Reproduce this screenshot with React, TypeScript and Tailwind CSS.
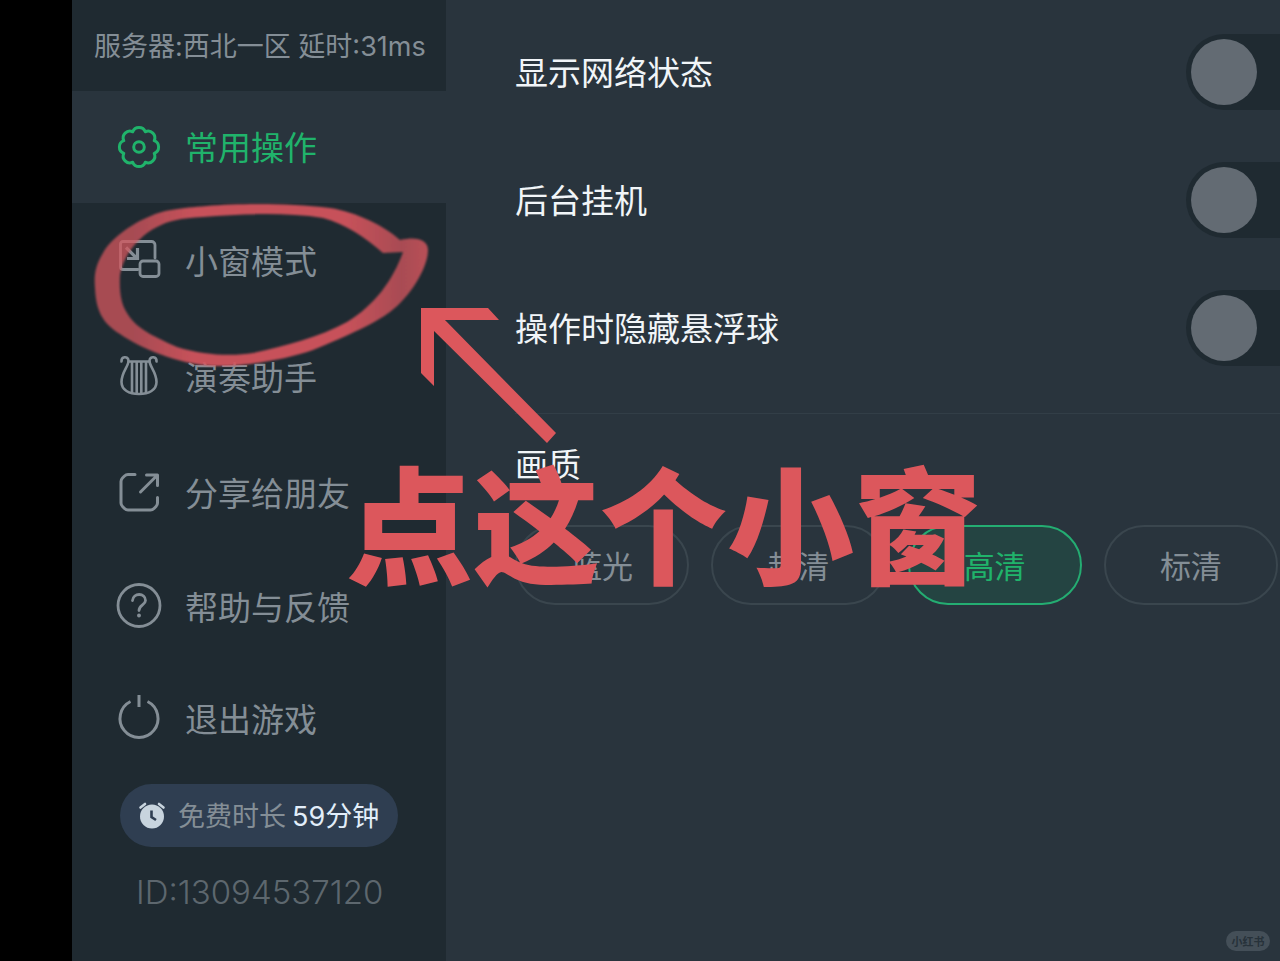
import React, { useState } from "react";
import clsx from "clsx";

const strokeProps = {
  fill: "none",
  stroke: "currentColor",
  strokeWidth: 3,
  strokeLinecap: "round" as const,
  strokeLinejoin: "round" as const,
};

const GearIcon = () => (
  <svg viewBox="-24 -24 48 48" className="size-12" {...strokeProps}>
    <path d="M15.2 -6.3A6.7 6.7 0 0 1 15.2 6.3A6.7 6.7 0 0 1 6.3 15.2A6.7 6.7 0 0 1 -6.3 15.2A6.7 6.7 0 0 1 -15.2 6.3A6.7 6.7 0 0 1 -15.2 -6.3A6.7 6.7 0 0 1 -6.3 -15.2A6.7 6.7 0 0 1 6.3 -15.2A6.7 6.7 0 0 1 15.2 -6.3Z" />
    <circle r="5.3" />
  </svg>
);

const WindowIcon = () => (
  <svg viewBox="0 0 48 48" className="size-12" {...strokeProps} strokeWidth={2.8}>
    <path d="M23 32.500H8A2.500 2.500 0 0 1 5.500 30V7A2.500 2.500 0 0 1 8 4.500H36.500A3.500 3.500 0 0 1 40 8V21" />
    <path d="M11 10.500L21 20.500M22.500 11V21.500H12" strokeWidth="3.200" strokeLinecap="butt" strokeLinejoin="miter" />
    <rect x="25" y="24" width="19" height="15.500" rx="3" />
  </svg>
);

const LyreIcon = () => (
  <svg viewBox="0 0 48 48" className="size-12" {...strokeProps} strokeWidth={2.6}>
    <path d="M6.500 8.500C6 3.500 13 2.500 13.500 7.500C14 13 6.500 19 6.500 29C6.500 37 14 41 24 41C34 41 41.500 37 41.500 29C41.500 19 34 13 34.500 7.500C35 2.500 42 3.500 41.500 8.500" />
    <path d="M13.500 8.500H34.500M17 9V39.500M21.700 9V40M26.300 9V40M31 9V39.500" />
  </svg>
);

const ShareIcon = () => (
  <svg viewBox="0 0 48 48" className="size-12" {...strokeProps}>
    <path d="M20 5.500H13Q11 5.500 9.500 7L7.500 9Q6 10.500 6 12.500V34Q6 36 7.500 37.500L9.500 39.500Q11 41 13 41H35.500Q37.500 41 39 39.500L41 37.500Q42.500 36 42.500 34V28.500" />
    <path d="M25.500 23L42 6.500M31.500 6H42.500V16.500" />
  </svg>
);

const HelpIcon = () => (
  <svg viewBox="0 0 48 48" className="size-12" {...strokeProps} strokeWidth={2.8}>
    <circle cx="24" cy="22.500" r="21" />
    <path d="M17.500 17.500C18 9.500 30.500 9.500 30.500 17.500C30.500 22 24 22 24 27.500" />
    <circle cx="24" cy="32.500" r="1.200" fill="currentColor" strokeWidth="1.500" />
  </svg>
);

const PowerIcon = () => (
  <svg viewBox="0 0 48 48" className="size-12" {...strokeProps} strokeLinecap="butt">
    <path d="M15.500 6.500A19 19 0 1 0 32.500 6.500M24 0V12" />
  </svg>
);

const AlarmIcon = () => (
  <svg viewBox="0 0 28 28" className="size-7">
    <circle cx="14" cy="14.500" r="12" fill="#c8d4de" />
    <path d="M2.500 5.500L7 2M25.500 5.500L21 2" stroke="#c8d4de" strokeWidth="2.600" strokeLinecap="round" />
    <path d="M13.500 8.500V15L18 18" fill="none" stroke="#2f3e52" strokeWidth="2.600" />
  </svg>
);

const menuItems = [
  { label: "常用操作", icon: GearIcon, height: "h-28" },
  { label: "小窗模式", icon: WindowIcon, height: "h-29" },
  { label: "演奏助手", icon: LyreIcon, height: "h-29" },
  { label: "分享给朋友", icon: ShareIcon, height: "h-29" },
  { label: "帮助与反馈", icon: HelpIcon, height: "h-28" },
  { label: "退出游戏", icon: PowerIcon, height: "h-28" },
];

const switches = ["显示网络状态", "后台挂机", "操作时隐藏悬浮球"];
const qualities = ["蓝光", "超清", "高清", "标清"];

// Hand-drawn ring and arrow laid over the panel
const Annotation = () => (
  <div className="pointer-events-none absolute left-0 top-0">
    <svg width="620" height="460" viewBox="0 0 620 460">
      <defs>
        <linearGradient id="ring" x1="94" y1="0" x2="428" y2="0" gradientUnits="userSpaceOnUse">
          <stop offset="0" stopColor="#d4565e" stopOpacity="0.75" />
          <stop offset="0.12" stopColor="#d4565e" stopOpacity="0.75" />
          <stop offset="0.3" stopColor="#d4545d" stopOpacity="0.93" />
          <stop offset="0.75" stopColor="#d4545d" stopOpacity="0.93" />
          <stop offset="0.92" stopColor="#d4565e" stopOpacity="0.76" />
          <stop offset="1" stopColor="#d4565e" stopOpacity="0.85" />
        </linearGradient>
        <filter id="soft">
          <feGaussianBlur stdDeviation="1" />
        </filter>
      </defs>
      <path
        fill="url(#ring)"
        fillRule="evenodd"
        filter="url(#soft)"
        d="M428 250C428 240 417 236 400 240C385 226 356 212 330 208C290 203 240 203 207 206C180 208 165 210 153 215C128 225 110 240 103 253C95 266 94 276 95 288C96 310 102 323 120 334C140 348 178 364 213 366C240 367 285 360 313 350C350 335 375 323 390 312C410 297 428 268 428 250ZM403 252L383 253C365 237 345 224 323 218C285 212 240 214 203 217C180 218 168 221 157 227C140 235 123 255 120 275C119 295 122 305 127 313C135 327 150 335 177 347C205 356 235 356 253 353C285 346 320 337 347 322C375 305 393 280 403 252Z"
      />
      <path fill="#dc575c" d="M421 308H488L499 320H445L556 433L547 443L434 331V386L421 373Z" />
    </svg>
  </div>
);

export default function App() {
  const [active, setActive] = useState("常用操作");
  const [quality, setQuality] = useState("高清");

  return (
    <div className="relative flex min-h-screen overflow-hidden bg-black pl-18 font-['Noto_Sans_CJK_SC',sans-serif] text-[#848e96]">
      <aside className="w-[374px] shrink-0 bg-[#1f2a31]">
        <p className="flex h-[91px] items-center whitespace-nowrap pl-[22px] pt-1 font-[Inter,'Noto_Sans_CJK_SC',sans-serif] text-[27px]">
          服务器:西北一区 延时:31ms
        </p>
        <nav>
          {menuItems.map(({ label, icon: Icon, height }) => (
            <button
              key={label}
              onClick={() => setActive(label)}
              className={clsx(
                "flex w-full items-center gap-[22px] whitespace-nowrap pl-[43px] text-[33px]",
                height,
                active === label && "bg-[#29343d] text-[#20b36b]"
              )}
            >
              <Icon />
              {label}
            </button>
          ))}
        </nav>
        <div className="mx-12 mt-[9px] flex h-[63px] items-center whitespace-nowrap rounded-full bg-[#2f3e51] pl-[18px] text-[27px]">
          <AlarmIcon />
          <span className="ml-3">免费时长</span>
          <span className="ml-1.5 pt-1 font-[Inter,'Noto_Sans_CJK_SC',sans-serif] text-[#e2eefa]">59分钟</span>
        </div>
        <p className="mt-6 pl-16 font-[Inter,sans-serif] text-[33px] font-light leading-[42px] text-[#5d676e]">
          ID:13094537120
        </p>
      </aside>

      <main className="min-w-0 flex-1 bg-[#29343d] pl-[69px] pt-2">
        {switches.map((label) => (
          <label key={label} className="flex h-32 items-center justify-between text-[33px] text-[#f1f5f8]">
            {label}
            <input
              type="checkbox"
              role="switch"
              className="-mr-12 h-19 w-[142px] shrink-0 appearance-none rounded-full bg-[#1f2a31] p-[5px] before:block before:size-[66px] before:rounded-full before:bg-[#636b73] checked:before:ml-auto checked:before:bg-[#20b36b]"
            />
          </label>
        ))}
        <section className="mt-[21px] border-t border-[#323e47] pt-6">
          <h2 className="text-[33px] font-normal leading-[50px] text-[#f1f5f8]">画质</h2>
          <div className="mt-[37px] grid grid-cols-4 gap-[22px] pr-0.5">
            {qualities.map((q) => (
              <button
                key={q}
                onClick={() => setQuality(q)}
                className={clsx(
                  "h-20 rounded-full border-2 text-[31px]",
                  quality === q ? "border-[#24ad72] bg-[#244442] text-[#20b36b]" : "border-[#3a464e]"
                )}
              >
                {q}
              </button>
            ))}
          </div>
        </section>
      </main>

      <Annotation />
      <p className="pointer-events-none absolute left-[346px] top-[430px] whitespace-nowrap text-[127px] font-black leading-[180px] text-[#dc575c]">
        点这个小窗
      </p>
      <span className="absolute bottom-2.5 right-2.5 flex h-5 w-11 items-center justify-center rounded-full bg-[#444f58] text-[11px] font-bold text-[#27323a]">
        小红书
      </span>
    </div>
  );
}
